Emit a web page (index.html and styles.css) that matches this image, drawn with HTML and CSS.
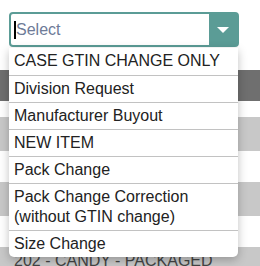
FILE: index.html
```html
<!DOCTYPE html>
<html lang="en">
<head>
    <meta charset='utf-8'>
    <meta name="viewport" content="width=device-width, initial-scale=1">
    <title>Select</title>
    <link rel="stylesheet" href="styles.css">
</head>
<body>

<div class="picker">
    <div class="field">
        <div class="field-text"><span class="caret"></span>Select</div>
        <div class="field-button">
            <svg width="12" height="6" viewBox="0 0 12 6"><path d="M0 0 L12 0 L6 6 Z" fill="#ffffff"/></svg>
        </div>
    </div>

    <ul class="options">
        <li>CASE GTIN CHANGE ONLY</li>
        <li>Division Request</li>
        <li>Manufacturer Buyout</li>
        <li>NEW ITEM</li>
        <li>Pack Change</li>
        <li>Pack Change Correction (without GTIN change)</li>
        <li>Size Change</li>
    </ul>
</div>

<div class="table">
    <div class="row head"></div>
    <div class="row filter"></div>
    <div class="row odd"></div>
    <div class="row"></div>
    <div class="row odd"></div>
    <div class="row"></div>
    <div class="row odd">202 - CANDY - PACKAGED</div>
</div>

</body>
</html>
```

FILE: styles.css
```css
body {
    margin: 0;
    background: #ffffff;
    font-family: "Liberation Sans", Arial, sans-serif;
    font-size: 16px;
    color: #222222;
    overflow: hidden;
}

.picker {
    position: relative;
    padding: 12px 21px 0 9px;
}

.field {
    display: flex;
    height: 35px;
    box-sizing: border-box;
    border: 2px solid #5b9c96;
    border-radius: 4px;
    background: #ffffff;
}

.field-text {
    flex: 1;
    display: flex;
    align-items: center;
    padding-left: 3px;
    color: #6e7b98;
}

.caret {
    display: inline-block;
    width: 2px;
    height: 18px;
    background: #000000;
    margin-right: 0;
}

.field-button {
    width: 28px;
    background: #5b9c96;
    display: flex;
    align-items: center;
    justify-content: center;
}

.options {
    position: absolute;
    top: 48px;
    left: 9px;
    width: 229px;
    margin: 0;
    padding: 0;
    list-style: none;
    background: #ffffff;
    border-radius: 0 0 5px 5px;
    box-shadow: 0 3px 10px rgba(0, 0, 0, 0.25);
    z-index: 2;
}

.options li {
    padding: 3px 4px 3px 5px;
    line-height: 20px;
    border-top: 1px solid #c2c2c2;
}

.options li:first-child {
    border-top: 0;
    padding-bottom: 4px;
}

.table {
    margin-top: 23px;
}

.row {
    height: 31px;
    box-sizing: border-box;
    padding: 4px 14px;
    line-height: 20px;
    color: #444444;
}

.row.head {
    background: #6f6f6f;
}

.row.filter {
    height: 16px;
}

.row.odd {
    height: 34px;
    background: #c8c8c8;
}
```
